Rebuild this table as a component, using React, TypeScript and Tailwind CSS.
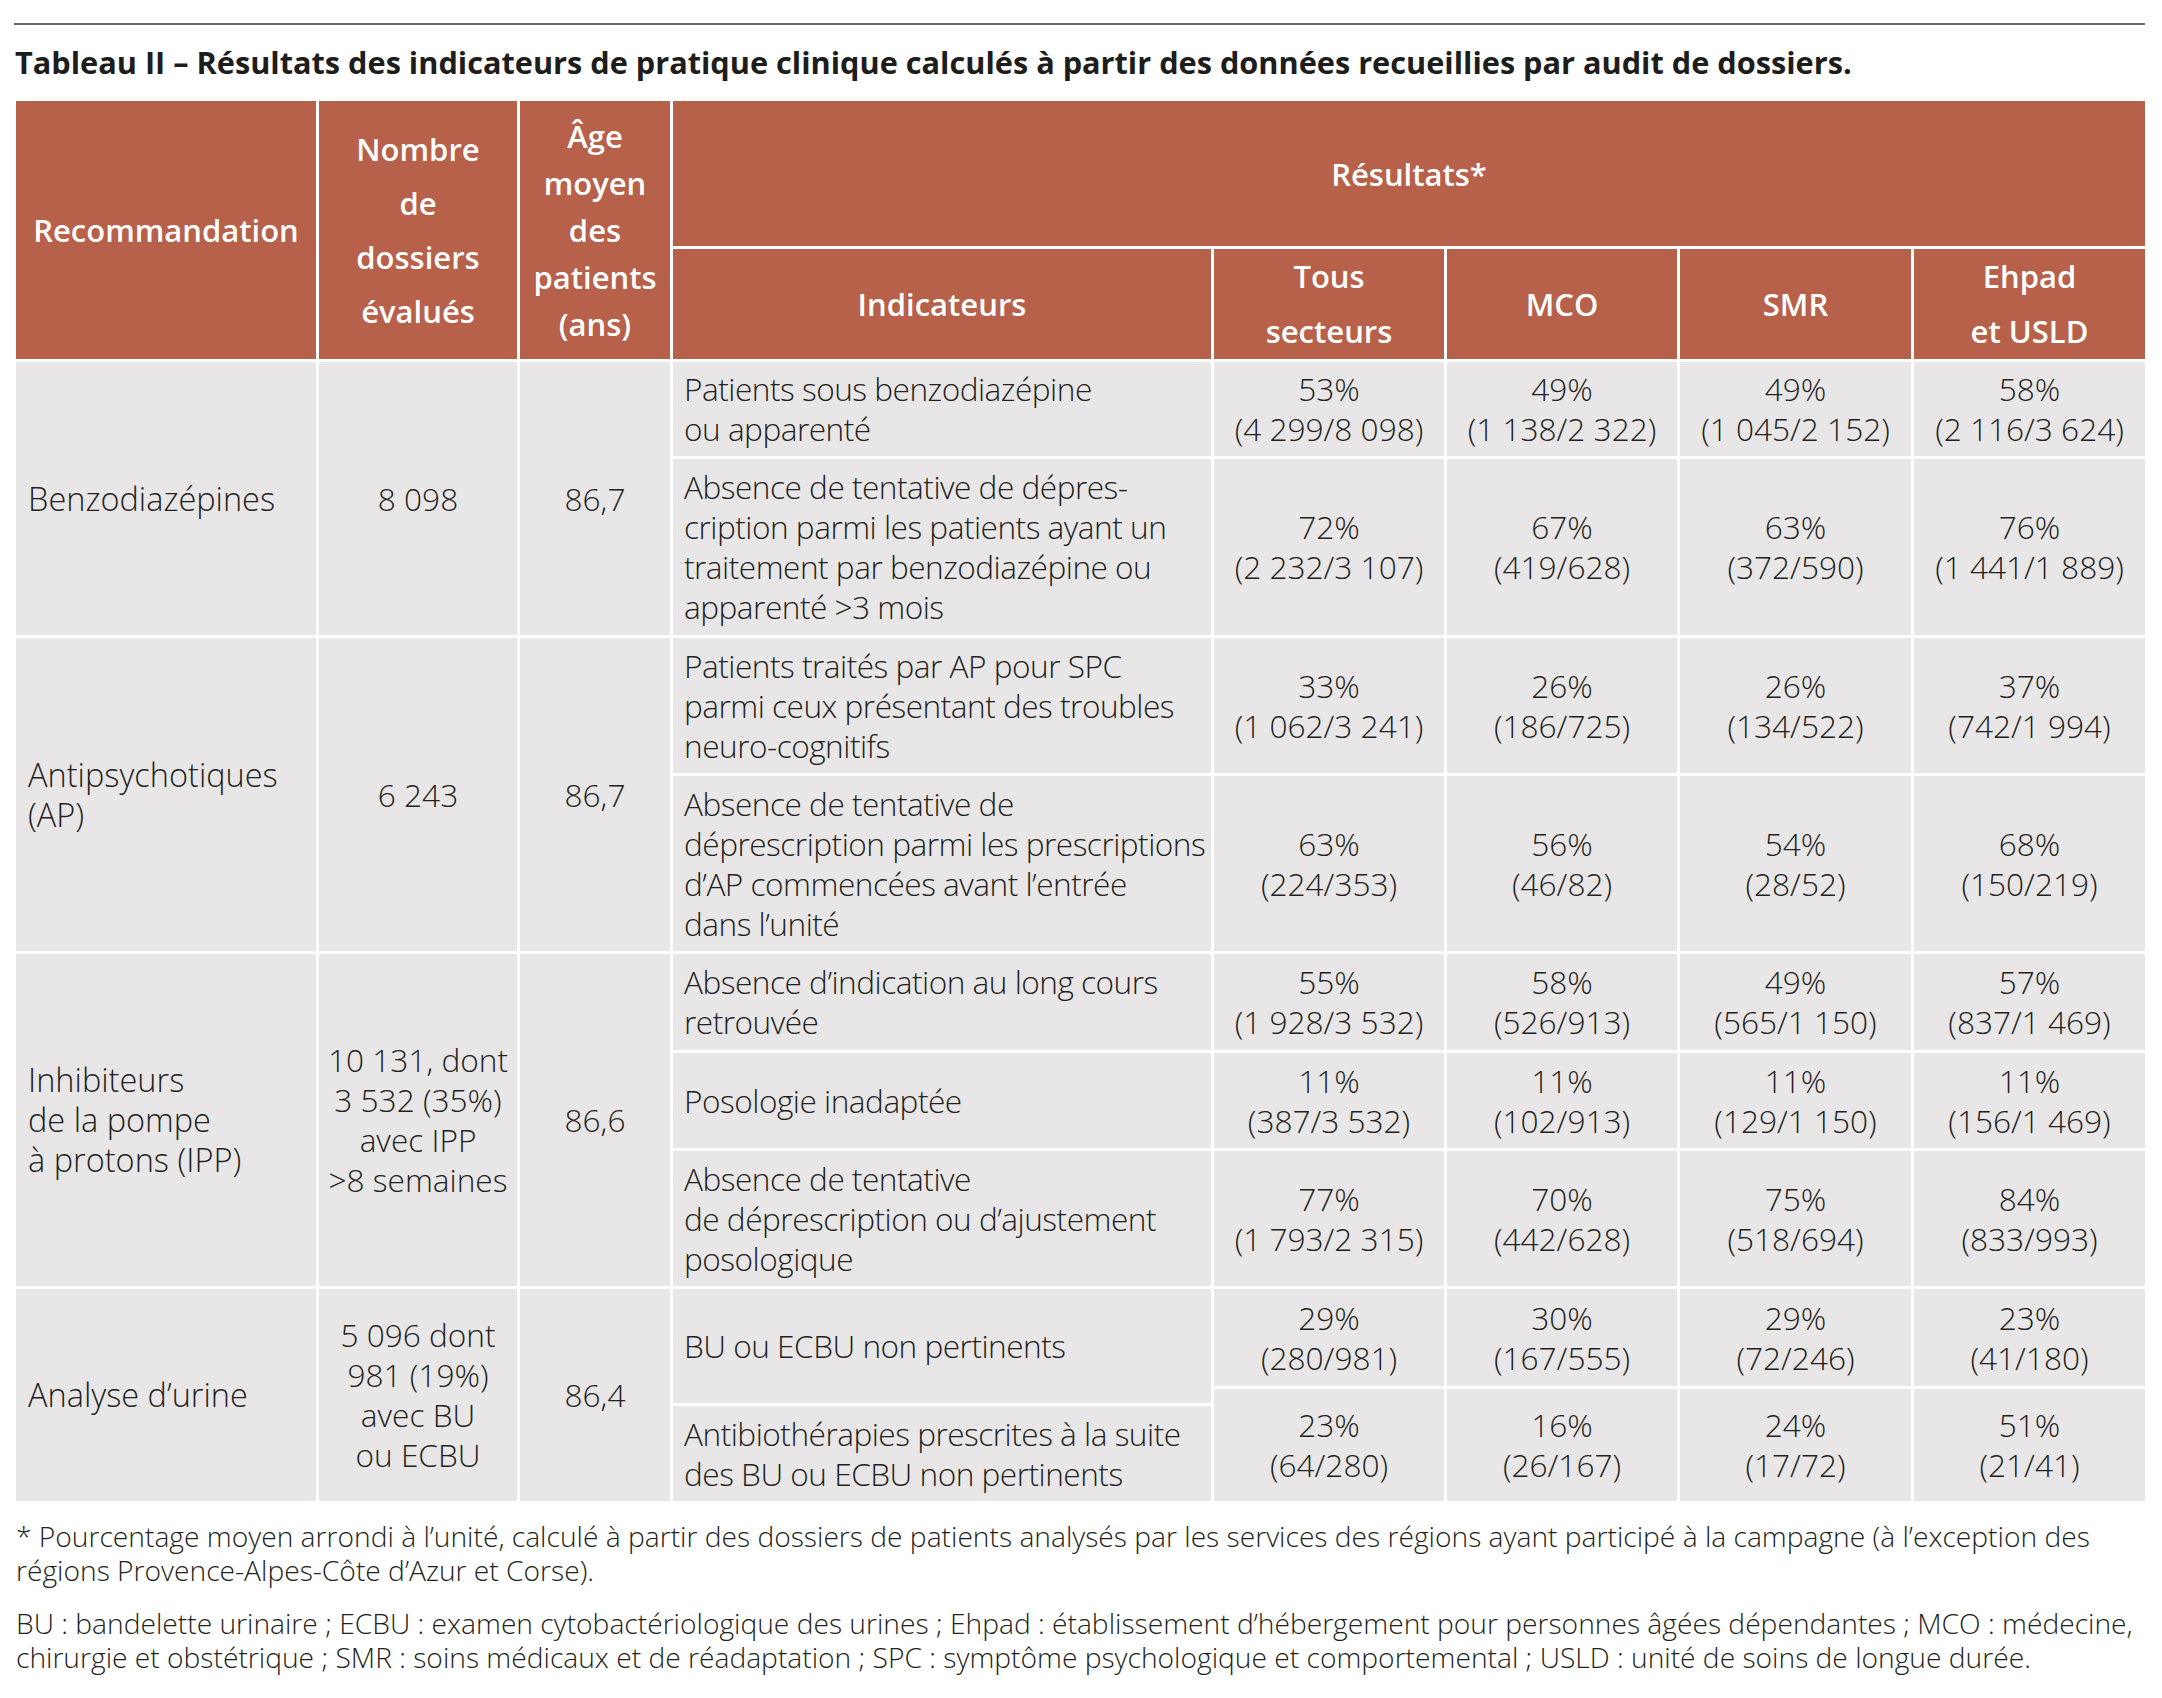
type Row = { ind: string[]; vals: [string, string][]; h: number; indH?: number };
type Group = { rec: string[]; n: string[]; age: string; rows: Row[] };

const groups: Group[] = [
  {
    rec: ["Benzodiazépines"],
    n: ["8 098"],
    age: "86,7",
    rows: [
      {
        ind: ["Patients sous benzodiazépine", "ou apparenté"],
        vals: [["53%", "(4 299/8 098)"], ["49%", "(1 138/2 322)"], ["49%", "(1 045/2 152)"], ["58%", "(2 116/3 624)"]],
        h: 94,
      },
      {
        ind: ["Absence de tentative de dépres-", "cription parmi les patients ayant un", "traitement par benzodiazépine ou", "apparenté >3 mois"],
        vals: [["72%", "(2 232/3 107)"], ["67%", "(419/628)"], ["63%", "(372/590)"], ["76%", "(1 441/1 889)"]],
        h: 176,
      },
    ],
  },
  {
    rec: ["Antipsychotiques", "(AP)"],
    n: ["6 243"],
    age: "86,7",
    rows: [
      {
        ind: ["Patients traités par AP pour SPC", "parmi ceux présentant des troubles", "neuro-cognitifs"],
        vals: [["33%", "(1 062/3 241)"], ["26%", "(186/725)"], ["26%", "(134/522)"], ["37%", "(742/1 994)"]],
        h: 135,
      },
      {
        ind: ["Absence de tentative de", "déprescription parmi les prescriptions", "d’AP commencées avant l’entrée", "dans l’unité"],
        vals: [["63%", "(224/353)"], ["56%", "(46/82)"], ["54%", "(28/52)"], ["68%", "(150/219)"]],
        h: 175,
      },
    ],
  },
  {
    rec: ["Inhibiteurs", "de la pompe", "à protons (IPP)"],
    n: ["10 131, dont", "3 532 (35%)", "avec IPP", ">8 semaines"],
    age: "86,6",
    rows: [
      {
        ind: ["Absence d’indication au long cours", "retrouvée"],
        vals: [["55%", "(1 928/3 532)"], ["58%", "(526/913)"], ["49%", "(565/1 150)"], ["57%", "(837/1 469)"]],
        h: 96,
      },
      {
        ind: ["Posologie inadaptée"],
        vals: [["11%", "(387/3 532)"], ["11%", "(102/913)"], ["11%", "(129/1 150)"], ["11%", "(156/1 469)"]],
        h: 95,
      },
      {
        ind: ["Absence de tentative", "de déprescription ou d’ajustement", "posologique"],
        vals: [["77%", "(1 793/2 315)"], ["70%", "(442/628)"], ["75%", "(518/694)"], ["84%", "(833/993)"]],
        h: 135,
      },
    ],
  },
  {
    rec: ["Analyse d’urine"],
    n: ["5 096 dont", "981 (19%)", "avec BU", "ou ECBU"],
    age: "86,4",
    rows: [
      {
        ind: ["BU ou ECBU non pertinents"],
        vals: [["29%", "(280/981)"], ["30%", "(167/555)"], ["29%", "(72/246)"], ["23%", "(41/180)"]],
        h: 97,
        indH: 114,
      },
      {
        ind: ["Antibiothérapies prescrites à la suite", "des BU ou ECBU non pertinents"],
        vals: [["23%", "(64/280)"], ["16%", "(26/167)"], ["24%", "(17/72)"], ["51%", "(21/41)"]],
        h: 112,
        indH: 95,
      },
    ],
  },
];

// widths of the four result columns
const resW = ["w-[230px]", "w-[230px]", "w-[231px]", "w-[231px]"];

const Lines = ({ lines }: { lines: string[] }) => (
  <>
    {lines.map((l, i) => (
      <span key={i} className="block whitespace-nowrap">{l}</span>
    ))}
  </>
);

const HeadCell = ({ lines, className }: { lines: string[]; className: string }) => (
  <div className={`bg-[#b7614b] text-white font-semibold flex flex-col items-center justify-center text-center ${className}`}>
    <Lines lines={lines} />
  </div>
);

const GroupRows = ({ g }: { g: Group }) => (
  <div className="flex gap-[3px]">
    <div className="w-[300px] bg-[#e8e6e7] flex flex-col justify-center pl-[12px] text-[32.5px]">
      <Lines lines={g.rec} />
    </div>
    <div className="w-[198px] bg-[#e8e6e7] flex flex-col justify-center items-center text-center">
      <Lines lines={g.n} />
    </div>
    <div className="w-[150px] bg-[#e8e6e7] flex flex-col justify-center items-center">
      {g.age}
    </div>
    <div className="flex gap-[3px]">
      <div className="w-[538px] flex flex-col gap-[3px] tracking-[-0.5px]">
        {g.rows.map((r, i) => (
          <div
            key={i}
            className="bg-[#e8e6e7] flex flex-col justify-center pl-[11px]"
            style={{ height: r.indH ?? r.h }}
          >
            <Lines lines={r.ind} />
          </div>
        ))}
      </div>
      <div className="flex flex-col gap-[3px]">
        {g.rows.map((r, i) => (
          <div key={i} className="flex gap-[3px]" style={{ height: r.h }}>
            {r.vals.map((v, j) => (
              <div key={j} className={`${resW[j]} bg-[#e8e6e7] flex flex-col justify-center items-center text-center`}>
                <span className="block whitespace-nowrap">{v[0]}</span>
                <span className="block whitespace-nowrap">{v[1]}</span>
              </div>
            ))}
          </div>
        ))}
      </div>
    </div>
  </div>
);

export default function App() {
  return (
    <div className="w-[2162px] h-[1698px] bg-white text-[#231f20] font-['Open_Sans',sans-serif] pt-[23px] pl-[14px] pr-[17px]">
      <div className="h-[2px] bg-[#6b6b6b]" />
      <h1 className="mt-[17px] pl-[1px] text-[30.7px] leading-[40px] font-bold text-[#1d1d1b] whitespace-nowrap">
        Tableau II – Résultats des indicateurs de pratique clinique calculés à partir des données recueillies par audit de dossiers.
      </h1>

      <div className="mt-[19px] ml-[2px] w-[2129px] bg-white flex flex-col gap-[3px] text-[31.6px] leading-[40px] font-light">
        {/* header */}
        <div className="flex gap-[3px] text-[31px]">
          <HeadCell lines={["Recommandation"]} className="w-[300px] h-[258px]" />
          <HeadCell lines={["Nombre", "de", "dossiers", "évalués"]} className="w-[198px] leading-[54px]" />
          <HeadCell lines={["Âge", "moyen", "des", "patients", "(ans)"]} className="w-[150px] leading-[47px]" />
          <div className="flex flex-col gap-[3px]">
            <HeadCell lines={["Résultats*"]} className="h-[145px]" />
            <div className="flex gap-[3px] h-[110px] leading-[55px]">
              <HeadCell lines={["Indicateurs"]} className="w-[538px]" />
              <HeadCell lines={["Tous", "secteurs"]} className="w-[230px]" />
              <HeadCell lines={["MCO"]} className="w-[230px]" />
              <HeadCell lines={["SMR"]} className="w-[231px]" />
              <HeadCell lines={["Ehpad", "et USLD"]} className="w-[231px]" />
            </div>
          </div>
        </div>

        {groups.map((g, i) => (
          <GroupRows key={i} g={g} />
        ))}
      </div>

      <div className="ml-[2px] text-[28.2px] leading-[34px] font-light">
        <p className="mt-[18px] whitespace-nowrap">
          * Pourcentage moyen arrondi à l’unité, calculé à partir des dossiers de patients analysés par les services des régions ayant participé à la campagne (à l’exception des
          <br />
          régions Provence-Alpes-Côte d’Azur et Corse).
        </p>
        <p className="mt-[19px] whitespace-nowrap">
          BU : bandelette urinaire ; ECBU : examen cytobactériologique des urines ; Ehpad : établissement d’hébergement pour personnes âgées dépendantes ; MCO : médecine,
          <br />
          chirurgie et obstétrique ; SMR : soins médicaux et de réadaptation ; SPC : symptôme psychologique et comportemental ; USLD : unité de soins de longue durée.
        </p>
      </div>
    </div>
  );
}
